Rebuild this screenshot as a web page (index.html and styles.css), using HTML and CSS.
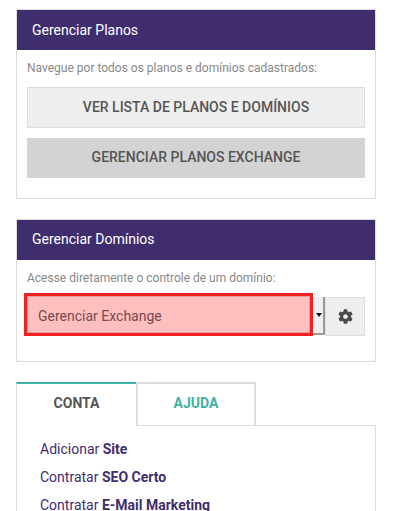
FILE: index.html
```html
<!DOCTYPE html>
<html>
<head>
  <title>Gerenciar</title>
  <link rel="stylesheet" href="styles.css">
</head>
<body>
  <div class="sidebar">
    <div class="panel">
      <div class="panel-title">Gerenciar Planos</div>
      <div class="panel-body">
        <p class="hint">Navegue por todos os planos e domínios cadastrados:</p>
        <a class="button light">VER LISTA DE PLANOS E DOMÍNIOS</a>
        <a class="button dark">GERENCIAR PLANOS EXCHANGE</a>
      </div>
    </div>

    <div class="panel">
      <div class="panel-title">Gerenciar Domínios</div>
      <div class="panel-body domain-body">
        <p class="hint">Acesse diretamente o controle de um domínio:</p>
        <div class="domain-row">
          <div class="select">
            <div class="select-value">Gerenciar Exchange</div>
            <div class="select-arrow"></div>
          </div>
          <a class="gear-button">
            <svg class="gear" viewBox="0 0 512 512"><path d="M487.4 315.7l-42.6-24.6c4.3-23.2 4.3-47 0-70.2l42.6-24.6c4.9-2.8 7.1-8.6 5.5-14-11.1-35.6-30-67.8-54.7-94.6-3.8-4.1-10-5.1-14.8-2.3L380.8 110c-17.9-15.4-38.5-27.3-60.8-35.1V25.8c0-5.6-3.9-10.5-9.4-11.7-36.7-8.2-74.3-7.8-109.2 0-5.5 1.2-9.4 6.1-9.4 11.7V75c-22.2 7.9-42.8 19.8-60.8 35.1L88.7 85.5c-4.9-2.8-11-1.9-14.8 2.3-24.7 26.7-43.6 58.9-54.7 94.6-1.7 5.4.6 11.2 5.5 14L67.3 221c-4.3 23.2-4.3 47 0 70.2l-42.6 24.6c-4.9 2.8-7.1 8.6-5.5 14 11.1 35.6 30 67.8 54.7 94.6 3.8 4.1 10 5.1 14.8 2.3l42.6-24.6c17.9 15.4 38.5 27.3 60.8 35.1v49.2c0 5.6 3.9 10.5 9.4 11.7 36.7 8.2 74.3 7.8 109.2 0 5.5-1.2 9.4-6.1 9.4-11.7v-49.2c22.2-7.9 42.8-19.8 60.8-35.1l42.6 24.6c4.9 2.8 11 1.9 14.8-2.3 24.7-26.7 43.6-58.9 54.7-94.6 1.5-5.5-.7-11.3-5.6-14.1zM256 336c-44.1 0-80-35.9-80-80s35.9-80 80-80 80 35.9 80 80-35.9 80-80 80z"/></svg>
          </a>
        </div>
      </div>
    </div>

    <div class="tabs">
      <a class="tab active">CONTA</a>
      <a class="tab">AJUDA</a>
    </div>
    <div class="tab-content">
      <a class="tab-link">Adicionar <b>Site</b></a>
      <a class="tab-link">Contratar <b>SEO Certo</b></a>
      <a class="tab-link">Contratar <b>E-Mail Marketing</b></a>
    </div>
  </div>
</body>
</html>
```

FILE: styles.css
```css
html,
body {
  height: 511px;
  overflow: hidden;
}

body {
  margin: 0;
  background-color: #fff;
  color: #555;
  font-family: Roboto, Arial, sans-serif;
  font-size: 14px;
}

.sidebar {
  width: 360px;
  margin-left: 16px;
  padding-top: 9px;
}

.panel {
  height: 190px;
  margin-bottom: 20px;
  box-sizing: border-box;
  border: 1px solid #ddd;
}

.panel + .panel {
  height: 143px;
}

.panel-title {
  height: 40px;
  padding-left: 15px;
  background-color: #3f2d6e;
  color: #fff;
  font-size: 14px;
  line-height: 40px;
}

.panel + .panel .panel-title {
  line-height: 38px;
}

.panel-body {
  padding: 0 10px;
}

.hint {
  margin: 0;
  padding-top: 9px;
  color: #888;
  font-size: 12px;
  line-height: 18px;
}

.button {
  display: block;
  height: 41px;
  margin-top: 10px;
  font-size: 14px;
  font-weight: 500;
  line-height: 39px;
  text-align: center;
  color: #555;
  box-sizing: border-box;
}

.button.light {
  background-color: #eee;
  border: 1px solid #ddd;
}

.button.dark {
  height: 40px;
  background-color: #d3d3d3;
  line-height: 38px;
}

.domain-row {
  display: flex;
  margin-top: 10px;
}

.select {
  display: flex;
  width: 298px;
  height: 38px;
  box-sizing: border-box;
  background-color: #eee;
  border-right: 2px solid #999;
  border-bottom: 2px solid #999;
}

.select-value {
  width: 283px;
  height: 37px;
  margin-top: -1px;
  padding-left: 10px;
  box-sizing: border-box;
  background-color: #ffbfbf;
  border: 1px solid #e0a0a0;
  outline: 3px solid #f22020;
  color: #7a4a4e;
  font-size: 14px;
  line-height: 38px;
}

.select-arrow {
  width: 0;
  height: 0;
  margin: 16px 0 0 6px;
  border-top: 4px solid #111;
  border-left: 3px solid transparent;
  border-right: 3px solid transparent;
}

.gear-button {
  display: flex;
  align-items: center;
  justify-content: center;
  width: 40px;
  height: 39px;
  box-sizing: border-box;
  background-color: #eee;
  border: 1px solid #ddd;
}

.gear {
  width: 15px;
  height: 15px;
  margin-top: -1px;
  fill: #4a4a4a;
}

.tabs {
  display: flex;
  height: 43px;
}

.tab {
  width: 120px;
  height: 43px;
  box-sizing: border-box;
  border-top: 2px solid #ddd;
  border-right: 2px solid #ddd;
  border-left: 2px solid #ddd;
  border-radius: 2px 2px 0 0;
  color: #3fb0a8;
  font-size: 14px;
  font-weight: 700;
  line-height: 39px;
  text-align: center;
}

.tab.active {
  height: 44px;
  border-top: 2px solid #3fb0a8;
  border-left: 1px solid #ddd;
  border-right: none;
  border-radius: 0;
  background-color: #fff;
  color: #555;
}

.tab-content {
  height: 120px;
  padding: 9px 23px;
  box-sizing: border-box;
  border: 1px solid #ddd;
}

.tab-link {
  display: block;
  color: #3f2d6e;
  font-size: 14px;
  line-height: 28px;
}

.tab-link b {
  font-weight: 700;
}
```
